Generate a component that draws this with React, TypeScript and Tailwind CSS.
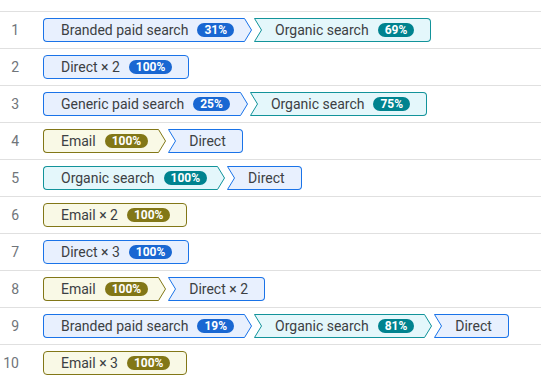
import type { ReactNode } from 'react'

type Tone = 'blue' | 'teal' | 'olive'

type Step = { label: string; pct?: string; tone: Tone }

const tones: Record<Tone, { bg: string; line: string; body: string; badge: string }> = {
  blue: { bg: '#e8f0fe', line: '#1a73e8', body: 'bg-[#e8f0fe] border-[#1a73e8]', badge: 'bg-[#1967d2]' },
  teal: { bg: '#e4f7fb', line: '#12939a', body: 'bg-[#e4f7fb] border-[#12939a]', badge: 'bg-[#00838f]' },
  olive: { bg: '#f9f9e6', line: '#827717', body: 'bg-[#f9f9e6] border-[#827717]', badge: 'bg-[#827717]' },
}

const paths: Step[][] = [
  [{ label: 'Branded paid search', pct: '31%', tone: 'blue' }, { label: 'Organic search', pct: '69%', tone: 'teal' }],
  [{ label: 'Direct × 2', pct: '100%', tone: 'blue' }],
  [{ label: 'Generic paid search', pct: '25%', tone: 'blue' }, { label: 'Organic search', pct: '75%', tone: 'teal' }],
  [{ label: 'Email', pct: '100%', tone: 'olive' }, { label: 'Direct', tone: 'blue' }],
  [{ label: 'Organic search', pct: '100%', tone: 'teal' }, { label: 'Direct', tone: 'blue' }],
  [{ label: 'Email × 2', pct: '100%', tone: 'olive' }],
  [{ label: 'Direct × 3', pct: '100%', tone: 'blue' }],
  [{ label: 'Email', pct: '100%', tone: 'olive' }, { label: 'Direct × 2', tone: 'blue' }],
  [
    { label: 'Branded paid search', pct: '19%', tone: 'blue' },
    { label: 'Organic search', pct: '81%', tone: 'teal' },
    { label: 'Direct', tone: 'blue' },
  ],
  [{ label: 'Email × 3', pct: '100%', tone: 'olive' }],
]

function Notch({ tone }: { tone: Tone }) {
  const t = tones[tone]
  return (
    <svg width="8" height="24" className="block shrink-0">
      <polygon points="0,0 8,0 8,24 0,24 7.5,12" fill={t.bg} />
      <polyline points="8,0.5 0.5,0.5 7.5,12 0.5,23.5 8,23.5" fill="none" stroke={t.line} strokeWidth="1" />
    </svg>
  )
}

function Arrow({ tone }: { tone: Tone }) {
  const t = tones[tone]
  return (
    <svg width="8" height="24" className="block shrink-0">
      <polygon points="0,0 0.5,0 8,12 0.5,24 0,24" fill={t.bg} />
      <polyline points="0,0.5 0.5,0.5 7.5,12 0.5,23.5 0,23.5" fill="none" stroke={t.line} strokeWidth="1" />
    </svg>
  )
}

function Chip({ step, first, last }: { step: Step; first: boolean; last: boolean }) {
  const t = tones[step.tone]
  let body = `flex h-6 items-center border-y ${t.body}`
  body += first ? ' border-l rounded-l-[4px] pl-[17px]' : ' pl-[13px]'
  body += last ? ' border-r rounded-r-[4px] pr-4' : ' pr-[10px]'
  return (
    <div className="flex shrink-0">
      {!first && <Notch tone={step.tone} />}
      <div className={body}>
        <span className="text-[14px] leading-none text-[#3c4043]">{step.label}</span>
        {step.pct && (
          <span
            className={`ml-[9px] flex h-[14px] items-center rounded-full px-[7px] text-[12px] font-bold leading-none text-white ${t.badge}`}
          >
            {step.pct}
          </span>
        )}
      </div>
      {!last && <Arrow tone={step.tone} />}
    </div>
  )
}

function Row({ n, children }: { n: number; children: ReactNode }) {
  return (
    <div className="flex h-[37px] items-center border-t border-[#e0e0e0]">
      <div className="w-[19px] text-right text-[14px] text-[#70757a]">{n}</div>
      <div className="ml-[24px] flex gap-[2px]">{children}</div>
    </div>
  )
}

export default function App() {
  return (
    <div className="h-[380px] w-[541px] overflow-hidden bg-white pt-[11px] font-['Roboto',_sans-serif]">
      {paths.map((steps, i) => (
        <Row key={i} n={i + 1}>
          {steps.map((s, j) => (
            <Chip key={j} step={s} first={j === 0} last={j === steps.length - 1} />
          ))}
        </Row>
      ))}
    </div>
  )
}
